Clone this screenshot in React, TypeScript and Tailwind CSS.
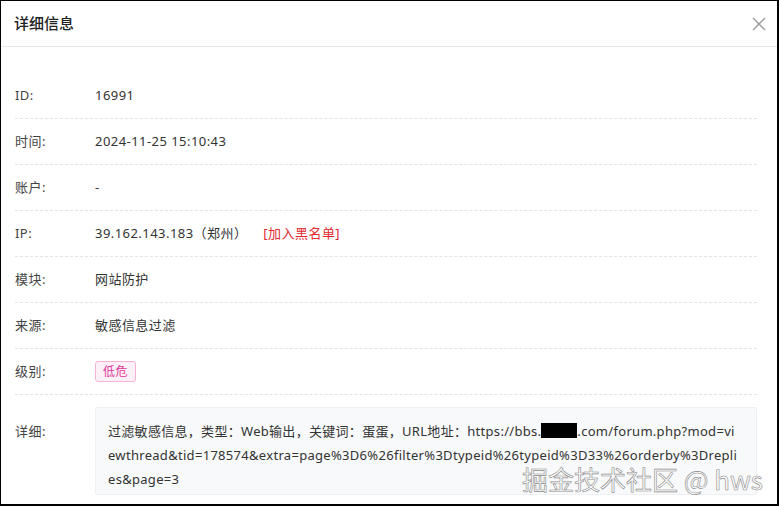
import React from "react";

interface Row {
  label: string;
  value: React.ReactNode;
}

const rows: Row[] = [
  { label: "ID:", value: "16991" },
  { label: "时间:", value: "2024-11-25 15:10:43" },
  { label: "账户:", value: "-" },
  {
    label: "IP:",
    value: (
      <span className="flex items-center">
        <span>39.162.143.183（郑州）</span>
        <span className="ml-[16px] text-[#e0282e] cursor-pointer">[加入黑名单]</span>
      </span>
    ),
  },
  { label: "模块:", value: "网站防护" },
  { label: "来源:", value: "敏感信息过滤" },
  {
    label: "级别:",
    value: (
      <span className="inline-flex h-[21px] items-center rounded-[3px] border border-[#f7b3d6] bg-[#fef0f7] px-[7px] text-[12px] text-[#e0379a]">
        低危
      </span>
    ),
  },
];

const App: React.FC = () => {
  return (
    <div
      className="relative h-[506px] w-[779px] overflow-hidden bg-white text-[13px] tracking-[0.45px] text-[#333]"
      style={{ fontFamily: '"Noto Sans", "Noto Sans CJK SC", sans-serif' }}
    >
      <div className="h-full w-full border-l border-t border-r-2 border-b-2 border-black">
        {/* header */}
        <div className="flex h-[46px] items-center justify-between border-b border-[#e8e8e8] pl-[13px] pr-[11px]">
          <h2 className="text-[15px] font-medium tracking-normal text-[#222]">详细信息</h2>
          <svg width="14" height="14" viewBox="0 0 14 14" className="cursor-pointer">
            <path d="M1 1L13 13M13 1L1 13" stroke="#9a9a9a" strokeWidth="1.3" fill="none" />
          </svg>
        </div>

        <div className="pl-[14px] pr-[20px] pt-[26px]">
          {rows.map((r, i) => (
            <div
              key={i}
              className="flex h-[46px] items-center border-b border-dashed border-[#e3e3e3]"
            >
              <div className="w-[80px] shrink-0 text-[#444]">{r.label}</div>
              <div>{r.value}</div>
            </div>
          ))}
          <div className="flex items-start pt-[12px]">
            <div className="w-[80px] shrink-0 pt-[12px] leading-6 text-[#444]">详细:</div>
            <div className="flex-1 break-words rounded-[2px] border border-[#eef0f2] bg-[#f8f9fa] pl-[12px] pr-[4px] pb-[3px] pt-[11px] leading-6 tracking-[0.3px]">
              过滤敏感信息，类型：Web输出，关键词：蛋蛋，URL地址：https://bbs.
              <span className="inline-block h-[15px] w-[36px] translate-y-[2px] bg-black align-baseline"></span>
              .com/forum.php?mod=vi<wbr />ewthread&amp;tid=178574&amp;extra=page%3D6%26filter%3Dtypeid%26typeid%3D33%26orderby%3Drepli<wbr />es&amp;page=3
            </div>
          </div>
        </div>
      </div>

      {/* watermark */}
      <div
        className="pointer-events-none absolute bottom-[14px] right-[16px] text-[26px] leading-none tracking-normal text-white"
        style={{
          fontFamily: '"Noto Sans CJK SC", sans-serif',
          WebkitTextStroke: "0.6px #8a8a8a",
        }}
      >
        掘金技术社区 @ hws
      </div>
    </div>
  );
};

export default App;
